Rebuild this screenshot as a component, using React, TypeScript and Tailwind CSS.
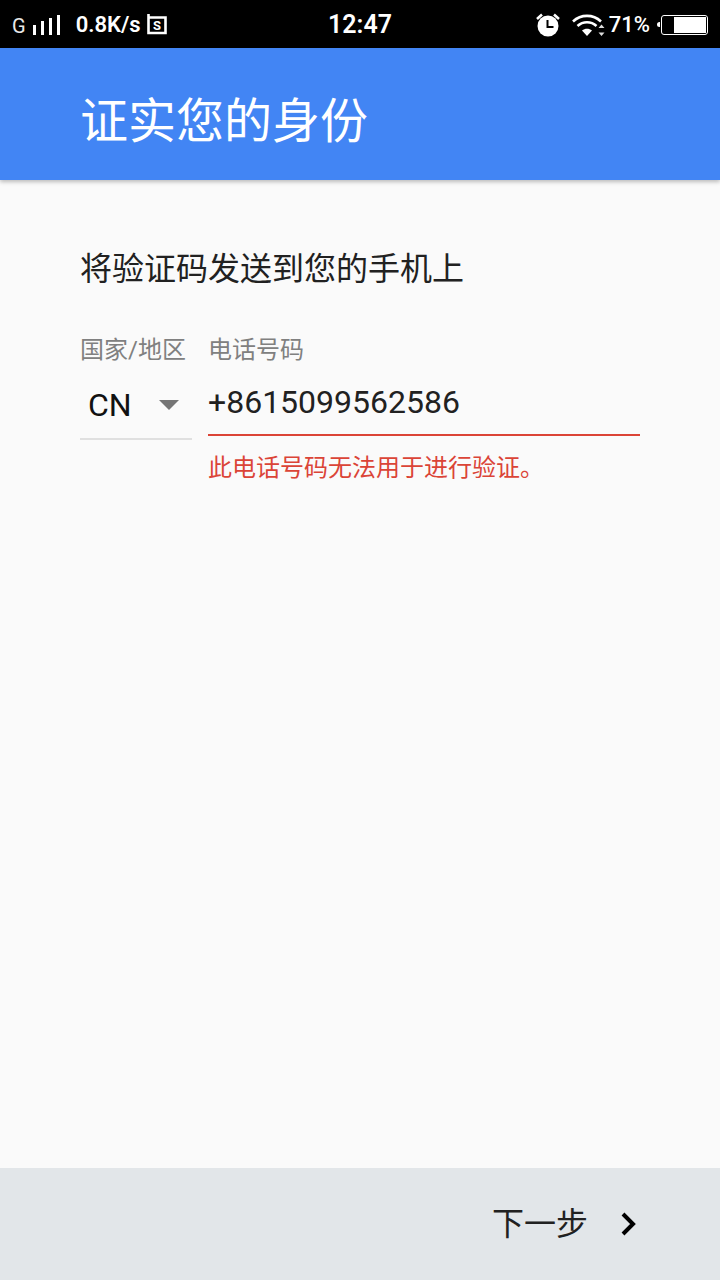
const font = "font-['Roboto','Noto_Sans_CJK_SC',sans-serif]";

function StatusBar() {
  return (
    <div className="flex h-12 items-center justify-between bg-black pt-px text-white">
      {/* left group */}
      <div className="flex w-[220px] items-center pl-3">
        <span className="mt-[3px] text-[20px] leading-none text-[#e8e8e8]">G</span>
        <div className="ml-[7px] flex h-5 items-end gap-[5px]">
          <div className="h-[10px] w-[3px] bg-white" />
          <div className="h-[14px] w-[3px] bg-white" />
          <div className="h-[17px] w-[3px] bg-white" />
          <div className="h-[20px] w-[3px] bg-white" />
        </div>
        <span className="ml-[16px] text-[22px] leading-none font-semibold">0.8K/s</span>
        <svg className="ml-[6px] -mt-[2px]" width="20" height="22" viewBox="0 0 20 22">
          <path d="M1.5 4.5H18.5V20H1.5V1" fill="none" stroke="#fff" strokeWidth="2.6" />
          <text x="10" y="17" textAnchor="middle" fontSize="13" fontWeight="700" fill="#fff" fontFamily="Roboto">S</text>
        </svg>
      </div>
      <span className="text-[25px] leading-none font-semibold">12:47</span>
      {/* right group */}
      <div className="flex w-[220px] items-center justify-end pr-3">
        <svg width="26" height="26" viewBox="0 0 26 26">
          <circle cx="13" cy="14" r="10.5" fill="#fff" />
          <path d="M12.5 8v7h6" fill="none" stroke="#000" strokeWidth="2" />
          <path d="M2 7 7 2.5M24 7 19 2.5" stroke="#fff" strokeWidth="2.6" />
        </svg>
        <svg className="ml-[11px]" width="34" height="24" viewBox="0 0 34 24">
          <path d="M1 8.5C9 1 21 1 29 8.5" fill="none" stroke="#fff" strokeWidth="2.6" />
          <path d="M5.5 13C11 8 19 8 24.5 13" fill="none" stroke="#fff" strokeWidth="2.6" />
          <path d="M10 17.5C13 15 17 15 20 17.5L15 23Z" fill="#fff" />
          <path d="M29.5 11.5 32.5 15H26.5ZM29.5 23 26.5 19.5H32.5Z" fill="#ddd" />
        </svg>
        <span className="ml-[3px] text-[22px] leading-none font-medium">71%</span>
        <div className="ml-[7px] h-[5px] w-[3px] rounded-l-sm bg-white" />
        <div className="ml-px flex h-[20px] w-[47px] items-center justify-end rounded-[3px] border-[1.5px] border-white p-px">
          <div className="h-full w-[32px] bg-white" />
        </div>
      </div>
    </div>
  );
}

export default function App() {
  return (
    <div className={`${font} flex h-[1280px] w-[720px] flex-col bg-[#fafafa]`}>
      <StatusBar />
      <header className="flex h-[132px] items-center bg-[#4285f4] pl-20 pt-4 shadow-[0_2px_4px_rgba(0,0,0,0.25)]">
        <h1 className="text-[48px] leading-none font-normal text-white">证实您的身份</h1>
      </header>

      <main className="flex-1 pl-20 pr-20 pt-[69px]">
        <p className="text-[32px] leading-10 text-[#212121]">将验证码发送到您的手机上</p>

        <div className="mt-[46px] flex gap-4">
          <div className="w-[112px]">
            <div className="text-[24px] leading-[30px] whitespace-nowrap text-[#808080]">国家/地区</div>
            <div className="mt-[17px] flex h-[58px] items-center border-b-2 border-[#e0e0e0] pb-[10px] pl-2">
              <span className="text-[32px] leading-none text-[#111]">CN</span>
              <svg className="ml-[27px]" width="20" height="10" viewBox="0 0 20 10">
                <path d="M0 0H20L10 10Z" fill="#757575" />
              </svg>
            </div>
          </div>
          <div className="flex-1">
            <div className="text-[24px] leading-[30px] text-[#808080]">电话号码</div>
            <div className="mt-[17px] flex h-[54px] items-center border-b-2 border-[#db4437] pb-[12px]">
              <span className="text-[32px] leading-none text-[#212121]">+8615099562586</span>
            </div>
            <p className="mt-[17px] text-[24px] leading-[30px] text-[#db4437]">此电话号码无法用于进行验证。</p>
          </div>
        </div>
      </main>

      <footer className="flex h-[112px] items-center justify-end bg-[#e2e6e9] pr-[82px]">
        <span className="text-[32px] leading-none text-[#212121]">下一步</span>
        <svg className="ml-[32px]" width="18" height="26" viewBox="0 0 18 26">
          <path d="M3 3 13 13 3 23" fill="none" stroke="#000" strokeWidth="4" />
        </svg>
      </footer>
    </div>
  );
}
